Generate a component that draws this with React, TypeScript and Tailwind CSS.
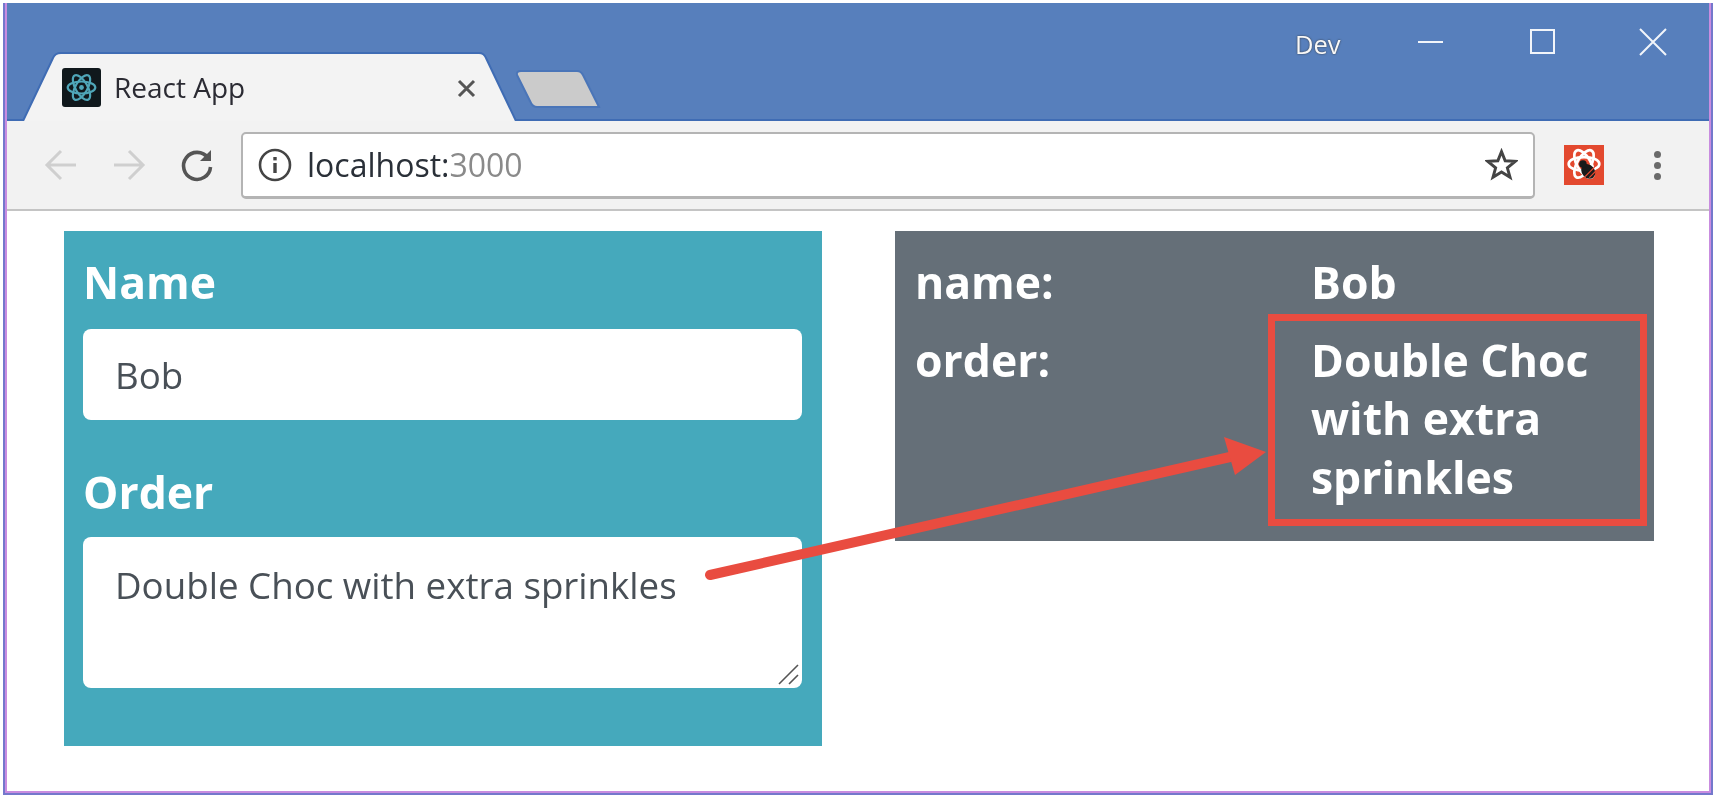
import React from "react";

const ui = { fontFamily: '"Open Sans", "Noto Sans", sans-serif' };

function ReactLogo({ stroke, size = 38 }: { stroke: string; size?: number }) {
  return (
    <svg width={size} height={size} viewBox="0 0 38 38" fill="none" stroke={stroke} strokeWidth="2.4">
      <ellipse cx="19" cy="19" rx="15" ry="6.5" />
      <ellipse cx="19" cy="19" rx="15" ry="6.5" transform="rotate(60 19 19)" />
      <ellipse cx="19" cy="19" rx="15" ry="6.5" transform="rotate(120 19 19)" />
      <circle cx="19" cy="19" r="2.6" fill={stroke} stroke="none" />
    </svg>
  );
}

function TitleBar() {
  return (
    <div className="relative flex h-[118px] shrink-0 items-start justify-end border-b-2 border-[#3f6cb4] bg-[#577fbc]">
      <svg className="absolute left-0 top-0" width="620" height="118" viewBox="0 0 620 118">
        <path d="M0 118H16L46 55Q48 50 54 50H472Q477 50 479 55L509 118Z" fill="#f3f3f3" />
        <path d="M16 118L46 55Q48 50 54 50H472Q477 50 479 55L509 118" fill="none" stroke="#3f6cb4" strokeWidth="2" />
        <path d="M514 68H570Q574 68 576 72L592 104H530Q526 104 524 100L510 72Q509 68 514 68Z" fill="#cbcbcb" stroke="#4a75b8" strokeWidth="2" />
      </svg>
      <div className="absolute left-[55px] top-[65px] flex items-center">
        <div className="flex h-[39px] w-[39px] items-center justify-center rounded-[3px] bg-[#10181c]">
          <ReactLogo stroke="#4fa6b8" size={35} />
        </div>
        <span className="ml-[13px] text-[28px] leading-[39px] text-[#2b2b33]" style={ui}>React App</span>
      </div>
      <svg className="absolute left-[450px] top-[76px]" width="19" height="19" viewBox="0 0 19 19" stroke="#555" strokeWidth="3">
        <path d="M2 2L17 17M17 2L2 17" />
      </svg>
      <span className="absolute left-[1288px] top-[26px] text-[25.5px] leading-[30px] text-[#f8f8f8] [text-shadow:0_0_2px_#333]" style={ui}>Dev</span>
      <svg className="absolute left-[1405px] top-[24px]" width="290" height="30" viewBox="0 0 290 30" fill="none" stroke="#f2f5fa" strokeWidth="2">
        <path d="M6 15H31" />
        <rect x="119" y="3" width="23" height="23" />
        <path d="M228 2L254 28M254 2L228 28" />
      </svg>
    </div>
  );
}

function Toolbar() {
  return (
    <div className="flex h-[90px] shrink-0 items-center border-b-2 border-[#c4c4c4] bg-[#f2f2f2]">
      <svg className="ml-[36px] shrink-0" width="36" height="36" viewBox="0 0 36 36" fill="none" stroke="#cfcfcf" strokeWidth="3">
        <path d="M33 18H4M18 4L4 18L18 32" />
      </svg>
      <svg className="ml-[32px] shrink-0" width="36" height="36" viewBox="0 0 36 36" fill="none" stroke="#cfcfcf" strokeWidth="3">
        <path d="M3 18H32M18 4L32 18L18 32" />
      </svg>
      <svg className="ml-[32px] shrink-0" width="36" height="36" viewBox="0 0 36 36" fill="none" stroke="#555" strokeWidth="3.6">
        <path d="M29 11A13.5 13.5 0 1 0 31.5 20" />
        <path d="M32 3V14H21Z" fill="#555" stroke="none" />
      </svg>
      <div className="ml-[26px] flex h-[67px] w-[1294px] shrink-0 items-center rounded-[5px] border-2 border-b-[3px] border-[#b4b4b4] bg-white pl-[14px] pr-[15px]">
        <svg width="36" height="36" viewBox="0 0 36 36" fill="none" stroke="#444" strokeWidth="2.6">
          <circle cx="18" cy="18" r="15" />
          <path d="M18 16V26" strokeWidth="3.4" />
          <path d="M18 10V13.4" strokeWidth="3.4" />
        </svg>
        <span className="ml-[14px] text-[32px] leading-none text-[#2a3038]" style={ui}>
          localhost:<span className="text-[#8a8a8a]">3000</span>
        </span>
        <svg className="ml-auto" width="33" height="33" viewBox="0 0 36 36" fill="none" stroke="#444" strokeWidth="3.2" strokeLinejoin="miter">
          <path d="M18 4L22 14L33 14.6L24.4 21.6L27.3 32L18 26.2L8.7 32L11.6 21.6L3 14.6L14 14Z" />
        </svg>
      </div>
      <div className="ml-[29px] flex h-[40px] w-[40px] shrink-0 items-center justify-center bg-[#e3492f]">
        <svg width="38" height="38" viewBox="0 0 36 36" fill="none">
          <ellipse cx="18" cy="17" rx="14.5" ry="6.5" stroke="#fff" strokeWidth="2.6" />
          <ellipse cx="18" cy="17" rx="14.5" ry="6.5" stroke="#fff" strokeWidth="2.6" transform="rotate(60 18 17)" />
          <ellipse cx="18" cy="17" rx="14.5" ry="6.5" stroke="#fff" strokeWidth="2.6" transform="rotate(120 18 17)" />
          <ellipse cx="22" cy="24" rx="6" ry="7.5" fill="#1a1a1a" transform="rotate(-40 22 24)" />
          <circle cx="17" cy="17" r="3.6" fill="#1a1a1a" />
          <path d="M19 29L28 20M23 30L30 23" stroke="#e3492f" strokeWidth="1.2" />
        </svg>
      </div>
      <div className="ml-[50px] flex shrink-0 flex-col gap-[4px]">
        <span className="h-[7px] w-[7px] rounded-full bg-[#6a6a6a]" />
        <span className="h-[7px] w-[7px] rounded-full bg-[#6a6a6a]" />
        <span className="h-[7px] w-[7px] rounded-full bg-[#6a6a6a]" />
      </div>
    </div>
  );
}

function FormPanel() {
  return (
    <div className="w-[758px] bg-[#45a9bc] px-[19px] pb-[58px] pt-[22px]" style={ui}>
      <label className="block text-[44.5px] font-bold leading-[58px] text-white">Name</label>
      <input
        readOnly
        value="Bob"
        className="mt-[18px] block h-[91px] w-[719px] rounded-[8px] bg-white px-[32px] text-[36.7px] text-[#495057] outline-none"
        style={ui}
      />
      <label className="mt-[43px] block text-[44.5px] font-bold leading-[58px] text-white">Order</label>
      <div className="relative mt-[16px] h-[151px] w-[719px]">
        <textarea
          readOnly
          value="Double Choc with extra sprinkles"
          className="block h-full w-full resize-none rounded-[8px] bg-white px-[32px] py-[23px] text-[36.7px] leading-[50px] text-[#495057] outline-none"
          style={ui}
        />
        <svg className="absolute bottom-[3px] right-[3px]" width="22" height="22" viewBox="0 0 22 22" stroke="#555" strokeWidth="1.6">
          <path d="M2 21L21 2M12 21L21 12" />
        </svg>
      </div>
    </div>
  );
}

function SummaryPanel() {
  return (
    <div className="grid w-[759px] grid-cols-[396px_1fr] gap-y-[19px] self-start bg-[#656f78] px-[20px] pb-[35px] pt-[22px] text-[44.5px] font-bold leading-[58.6px] text-white" style={ui}>
      <div>name:</div>
      <div>Bob</div>
      <div>order:</div>
      <div className="w-[320px]">Double Choc with extra sprinkles</div>
    </div>
  );
}

export default function App() {
  return (
    <div className="h-[798px] w-[1718px] overflow-hidden bg-white pb-[3px] pl-[3px] pr-[5px] pt-[3px] blur-[0.5px]">
      <div className="h-full border-x-2 border-b-2 border-[#7478cc]">
        <div className="relative flex h-full flex-col border-x-2 border-b-2 border-[#c98ce0] bg-white">
          <TitleBar />
          <Toolbar />
          <div className="flex gap-[73px] pl-[57px] pt-[20px]">
            <FormPanel />
            <SummaryPanel />
          </div>
          <div className="pointer-events-none absolute left-[1261px] top-[311px] h-[212px] w-[379px] border-[7px] border-[#e94c40]" />
          <svg className="pointer-events-none absolute left-[690px] top-[430px]" width="580" height="160" viewBox="0 0 580 160" fill="#e94c40">
            <path d="M13 142L533 24" stroke="#e94c40" strokeWidth="10" strokeLinecap="round" />
            <path d="M569 19L527 4L538 42Z" />
          </svg>
        </div>
      </div>
    </div>
  );
}
